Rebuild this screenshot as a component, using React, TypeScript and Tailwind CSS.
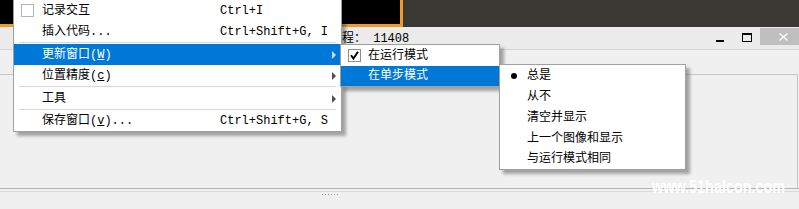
import type { ReactNode } from 'react';

// Windows-style context menu (Chinese UI) over a dark canvas + title bar

const font = "font-['Liberation_Mono','Noto_Sans_CJK_SC',monospace]";

function Arrow({ light }: { light?: boolean }) {
  return (
    <span
      className={`block h-0 w-0 border-y-[4px] border-l-[4px] border-y-transparent ${
        light ? 'border-l-[#c9dcf2]' : 'border-l-[#505050]'
      }`}
    />
  );
}

function Box({ checked }: { checked?: boolean }) {
  return (
    <svg width="13" height="13" viewBox="0 0 13 13" className="block">
      <rect x="0.5" y="0.5" width="12" height="12" fill="#fff" stroke={checked ? '#8c8c8c' : '#b4b4b4'} />
      {checked && <path d="M3 6.2 L5.4 9.6 L10 2.8" fill="none" stroke="#000" strokeWidth="1.9" />}
    </svg>
  );
}

function Sep() {
  return <div className="mx-[5px] h-[2px] border-t border-[#d7d7d7]" />;
}

type RowProps = {
  lead?: ReactNode;
  leadW: number;
  leadPad: string;
  label: ReactNode;
  shortcut?: string;
  arrow?: boolean;
  active?: boolean;
  h?: string;
  arrowMr?: string;
};

function Row({ lead, leadW, leadPad, label, shortcut, arrow, active, h = 'h-[21px]', arrowMr = 'mr-[5px]' }: RowProps) {
  return (
    <div className={`flex ${h} items-center leading-none ${active ? 'bg-[#0078d7] text-white' : ''}`}>
      <div className={`flex shrink-0 items-center ${leadPad}`} style={{ width: leadW }}>
        {lead}
      </div>
      <div className="w-[178px] shrink-0 whitespace-nowrap">{label}</div>
      <div className="flex-1 whitespace-nowrap">{shortcut}</div>
      {arrow && <div className={arrowMr}><Arrow light={active} /></div>}
    </div>
  );
}

export default function App() {
  const shadow = 'shadow-[4px_4px_3px_rgba(0,0,0,0.32)]';

  return (
    <div className={`relative h-[209px] w-[799px] overflow-hidden bg-[#f0f0f0] text-[12px] text-black ${font}`}>
      {/* top canvas strip */}
      <div className="flex h-[27px]">
        <div className="w-[403px] border-b-[3px] border-r-[3px] border-[#ee9a2e] bg-black" />
        <div className="flex-1 bg-[#3a3833]" />
      </div>

      {/* window title bar */}
      <div className="flex h-[23px] items-start border-b border-[#d6d6d6] bg-[#ebebeb]">
        <span className="ml-[330px] mt-[6px] shrink-0 whitespace-nowrap leading-none">线程： 11408</span>
        <div className="flex-1" />
        <div className="mr-[-7px] flex shrink-0 items-start">
          <div className="mt-[13px] h-[2px] w-[8px] bg-black" />
          <div className="ml-[18px] mt-[6px] h-[9px] w-[10px] border border-t-2 border-black" />
          <div className="ml-[8px] mt-[1px] flex h-[17px] w-[46px] items-center justify-center bg-[#bfbfbf]">
            <svg width="9" height="8" viewBox="0 0 9 8">
              <path d="M0.5 0.5 L8.5 7.5 M8.5 0.5 L0.5 7.5" stroke="#fff" strokeWidth="1.2" />
            </svg>
          </div>
        </div>
      </div>

      {/* panel area */}
      <div className="h-[138px] pt-[24px]">
        <div className="mr-[1px] h-full border-r border-t border-[#c6c6c6]" />
      </div>
      <div className="h-px bg-[#b6b6b6]" />
      <div className="h-[2px]" />
      <div className="h-px bg-[#dadada]" />
      <div className="ml-[322px] mt-[2px] flex gap-[2px]">
        {[0, 1, 2, 3, 4, 5].map((i) => (
          <span key={i} className="h-px w-px bg-[#9a9a9a]" />
        ))}
      </div>

      {/* main menu */}
      <div className={`absolute left-[13px] top-[-1px] w-[329px] border border-[#a0a0a0] bg-white ${shadow}`}>
        <Row leadW={28} leadPad="pl-[7px]" lead={<Box />} label="记录交互" shortcut="Ctrl+I" />
        <Row leadW={28} leadPad="pl-[7px]" label="插入代码..." shortcut="Ctrl+Shift+G, I" />
        <Sep />
        <Row leadW={28} leadPad="pl-[7px]" active arrow label={<>更新窗口(<u>W</u>)</>} />
        <Row leadW={28} leadPad="pl-[7px]" arrow label={<>位置精度(<u>c</u>)</>} />
        <Sep />
        <Row leadW={28} leadPad="pl-[7px]" arrow label="工具" />
        <Sep />
        <Row leadW={28} leadPad="pl-[7px]" h="h-[20px]" label={<>保存窗口(<u>v</u>)...</>} shortcut="Ctrl+Shift+G, S" />
      </div>

      {/* submenu: 更新窗口 */}
      <div className={`absolute left-[340px] top-[44px] w-[160px] border border-[#a0a0a0] bg-white ${shadow}`}>
        <Row leadW={27} leadPad="pl-[7px]" lead={<Box checked />} label="在运行模式" />
        <Row leadW={27} leadPad="pl-[7px]" h="h-[20px]" active arrow arrowMr="mr-[4px]" label="在单步模式" />
      </div>

      {/* submenu: 在单步模式 */}
      <div className={`absolute left-[499px] top-[64px] w-[187px] border border-[#a0a0a0] bg-white ${shadow}`}>
        <Row
          leadW={27}
          leadPad="pl-[11px]"
          lead={<span className="block h-[6px] w-[6px] rounded-full bg-black" />}
          label="总是"
        />
        <Row leadW={27} leadPad="" label="从不" />
        <Row leadW={27} leadPad="" label="清空并显示" />
        <Row leadW={27} leadPad="" label="上一个图像和显示" />
        <Row leadW={27} leadPad="" h="h-[20px]" label="与运行模式相同" />
      </div>

      {/* watermark */}
      <div className="absolute left-[652px] top-[178px] origin-left scale-x-[0.8] whitespace-nowrap font-['Liberation_Sans',sans-serif] text-[18px] font-bold leading-none text-white">
        www.51halcon.com
      </div>
    </div>
  );
}
